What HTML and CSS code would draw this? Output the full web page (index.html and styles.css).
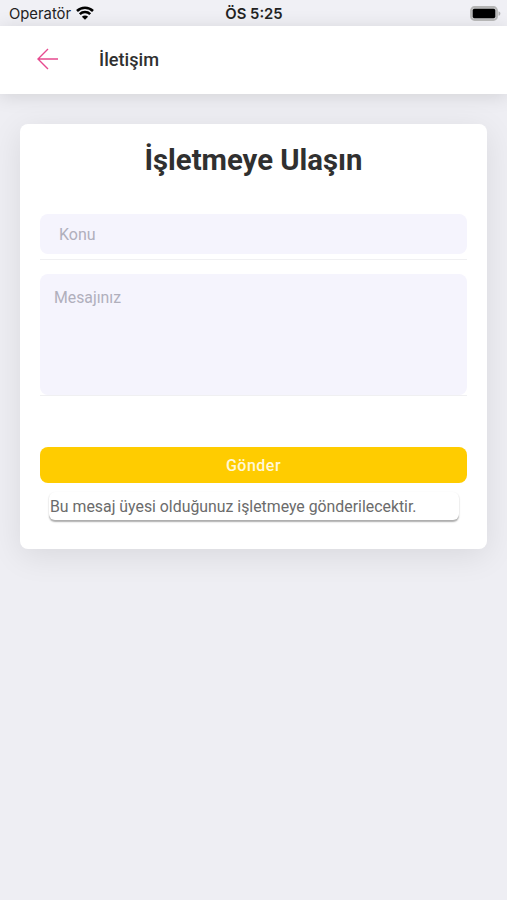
FILE: index.html
```html
<!DOCTYPE html>
<html lang="tr">
<head>
<meta charset="utf-8">
<title>İletişim</title>
<link rel="stylesheet" href="styles.css">
</head>
<body>
<div class="status">
  <div class="carrier"><span>Operatör</span>
    <svg class="wifi" width="18" height="14" viewBox="0 0 18 14"><path d="M1 5a11.300 11.300 0 0 1 16 0"/><path d="M3.800 8.200a7.400 7.400 0 0 1 10.400 0"/><path class="dot" d="M9 13.800 5.900 10.800a4.400 4.400 0 0 1 6.200 0z"/></svg>
  </div>
  <div class="time">ÖS 5:25</div>
  <div class="power"><svg width="31" height="15" viewBox="0 0 31 15"><rect class="shell" x="1" y="1" width="26" height="13" rx="3.500"/><rect x="2.700" y="2.700" width="22.600" height="9.600" rx="1.800"/><path class="cap" d="M28.500 5.200c2.500.8 2.500 3.800 0 4.600z"/></svg></div>
</div>
<header class="bar">
  <svg class="back" width="22" height="22" viewBox="0 0 22 22"><path d="M21 11H1M11 1 1 11l10 10"/></svg>
  <h1>İletişim</h1>
</header>
<main class="card">
  <h2>İşletmeye Ulaşın</h2>
  <div class="field"><input class="subject" type="text" placeholder="Konu"></div>
  <div class="field area"><textarea class="message" placeholder="Mesajınız"></textarea></div>
  <button class="send">Gönder</button>
  <p class="note">Bu mesaj üyesi olduğunuz işletmeye gönderilecektir.</p>
</main>
</body>
</html>
```

FILE: styles.css
```css
* { box-sizing: border-box; }
body { margin: 0; min-height: 900px; background: #eeeef3; font-family: Roboto, sans-serif; color: #303030; }
.status { display: grid; grid-template-columns: 1fr auto 1fr; align-items: center; height: 26px; padding: 1px 6px 0 9px; background: #f0f0f5; font-family: Inter, sans-serif; font-size: 14.8px; color: #222; }
.carrier { display: flex; align-items: center; gap: 5px; }
.wifi { fill: none; stroke: #000; stroke-width: 2.5; margin-top: -2px; }
.wifi .dot { fill: #000; stroke: none; }
.time { font-weight: 600; margin-left: -2px; }
.power { display: flex; justify-content: flex-end; margin-top: -1px; }
.shell { fill: #c4c4c6; stroke: #b5b5b5; stroke-width: 1.8; }
.cap { fill: #b0b0b0; }
.bar { display: flex; align-items: center; height: 68px; padding: 0 0 3px 37px; gap: 40px; background: #fff; box-shadow: 0 2px 18px rgba(0,0,0,.12); }
.back { fill: none; stroke: #e64a8f; stroke-width: 1.4; }
h1 { margin: 2px 0 0; font-size: 18.2px; font-weight: 500; }
.card { width: 467px; height: 425px; margin: 30px auto 0; padding: 17px 20px 0; background: #fff; border-radius: 8px; box-shadow: 0 7px 32px rgba(0,0,0,.09); }
h2 { margin: 0 0 35px; font-size: 29.3px; line-height: 38px; font-weight: 700; text-align: center; }
.field { height: 46px; border-bottom: 1px solid #f0f0f2; }
.subject, .message { display: block; width: 100%; border: 0; border-radius: 8px; background: #f5f4fd; font: 16px Roboto, sans-serif; resize: none; }
.subject { height: 40px; padding: 0 19px; }
.message { height: 121px; padding: 14px; font-size: 15.8px; }
::placeholder { color: #b0afbc; opacity: 1; }
.area { height: 122px; margin-top: 14px; }
.send { display: block; width: 100%; height: 36px; margin-top: 51px; border: 0; border-radius: 8px; background: #ffcc00; color: #fff8d8; font: 500 16px Roboto, sans-serif; letter-spacing: .5px; }
.note { width: 410px; height: 28px; margin: 9px 0 0 9px; padding-left: 1px; font-size: 15.85px; line-height: 29px; color: #6b6b6b; border-radius: 6px; box-shadow: 0 1.5px 1.5px rgba(0,0,0,.32); }
```
